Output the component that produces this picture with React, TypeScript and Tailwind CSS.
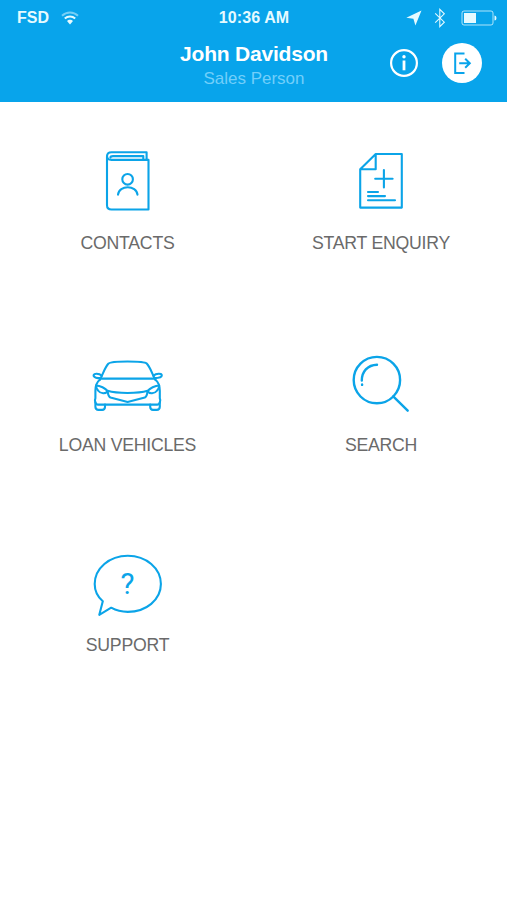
import type { ReactNode } from 'react'

interface MenuItem {
  id: string
  label: string
  icon: ReactNode
}

function ContactsIcon() {
  return (
    <>
      <path d="M24.5 4H59.6V11.6H61.5V61.2H24.5Q20 61.2 20 57V8.2Q20 4 24.5 4Z" />
      <path d="M20 8C20 10.8 22 11.6 24.5 11.6H60M56.3 11.2V7.8H26Q23.6 7.8 23.4 9.2" />
      <circle cx="40.6" cy="31" r="5.3" />
      <path d="M31 46.4C32 36.4 49.5 36.4 50.5 46.4" />
    </>
  )
}

function EnquiryIcon() {
  return (
    <>
      <path d="M35.7 5.7H61.8V59.3H20.2V21L35.7 5.7V21H20.2" />
      <path d="M43.9 21.8V39.2M35.2 30.5H52.6M28 43.7H38M28 47.8H45M28 52H55" />
    </>
  )
}

function CarIcon() {
  return (
    <>
      <path d="M12.8 29.5C16 24 17.8 17 21.5 13.3C24 10.5 57 10.5 59.7 13.3C63.4 17 65.2 24 68.4 29.5" />
      <path d="M13.4 28.3H67.8M13.8 27.8C10.5 27.8 6.6 27.5 6.6 25C6.6 22.8 12 22.8 14.8 25.4M67.4 27.8C70.7 27.8 74.8 27.5 74.8 25C74.8 22.8 69.2 22.8 66.4 25.4" />
      <path d="M12.8 29.5C9 32.5 8.4 36 8.4 40.5V48C7.4 50 8.2 54.3 11 54.3H70.2C73 54.3 73.8 50 72.8 48V40.5C72.8 36 72.2 32.5 68.4 29.5" />
      <path d="M8.4 52V56.5Q8.4 59.6 11.5 59.6H15.2Q18 59.6 18 56.5V54.3M72.8 52V56.5Q72.8 59.6 69.7 59.6H66Q63.2 59.6 63.2 56.5V54.3" />
      <path d="M9 35.2C13 35.3 18.5 38 20.6 40.8C19 43.8 13.5 43.6 11 40.2C9.6 38.4 9 37 9 35.2M72.2 35.2C68.2 35.3 62.7 38 60.6 40.8C62.2 43.8 67.7 43.6 70.2 40.2C71.6 38.4 72.2 37 72.2 35.2" />
      <path d="M20.6 40.5C30 43.4 51.2 43.4 60.6 40.5C60.3 43.5 60 46 57.8 47.2L40.6 51.7L23.4 47.2C21.2 46 20.9 43.5 20.6 40.5" />
    </>
  )
}

function SearchIcon() {
  return (
    <>
      <circle cx="36.9" cy="29.8" r="23.2" strokeWidth="2.4" />
      <path d="M53.2 46L67.7 60.4M37 14.4C27.5 14.6 21.8 21.5 21.8 30.2M22.1 34.2V34.6" strokeWidth="2.4" />
    </>
  )
}

function SupportIcon() {
  return (
    <>
      <path d="M15.8 51C10.5 46.5 7.7 40.5 7.7 33.8C7.7 18 22.4 5.4 40.8 5.4C59.2 5.4 73.9 18 73.9 33.8C73.9 49.4 59.2 61.6 40.8 61.6C34.8 61.6 29 60.1 24.2 57.4L12.3 64.5Z" />
      <text
        x="40.6"
        y="43.7"
        textAnchor="middle"
        fontSize="29.5"
        fill="currentColor"
        stroke="none"
        className="font-[Roboto,sans-serif]"
      >
        ?
      </text>
    </>
  )
}

const MENU_ITEMS: MenuItem[] = [
  { id: 'contacts', label: 'CONTACTS', icon: <ContactsIcon /> },
  { id: 'enquiry', label: 'START ENQUIRY', icon: <EnquiryIcon /> },
  { id: 'vehicles', label: 'LOAN VEHICLES', icon: <CarIcon /> },
  { id: 'search', label: 'SEARCH', icon: <SearchIcon /> },
  { id: 'support', label: 'SUPPORT', icon: <SupportIcon /> },
]

function StatusBar() {
  return (
    <div className="grid h-9 grid-cols-[1fr_auto_1fr] items-center pl-[17px] pr-[10px] text-[#e5faff]">
      <div className="flex items-center gap-3">
        <span className="text-[16px] font-bold">FSD</span>
        <svg width="18" height="14" viewBox="0 0 18 14" fill="none" stroke="currentColor" strokeWidth="2">
          <path d="M1 4.8C5.5 .4 12.5 .4 17 4.8" opacity=".5" />
          <path d="M3.8 7.6C6.8 4.8 11.2 4.8 14.2 7.6" />
          <path d="M6 10C7.6 8.2 10.4 8.2 12 10L9 13.4Z" fill="currentColor" stroke="none" />
        </svg>
      </div>
      <span className="mr-[6px] text-[16px] font-bold tracking-[0.1px] whitespace-nowrap">10:36 AM</span>
      <div className="flex items-center justify-end">
        <svg width="16" height="16" viewBox="0 0 16 16" fill="currentColor" className="mr-3">
          <path d="M15.5 .5L9.4 15.6L7.4 8.8L.3 7.8Z" />
        </svg>
        <svg
          width="12"
          height="20"
          viewBox="0 0 12 20"
          fill="none"
          stroke="currentColor"
          strokeWidth="1.1"
          className="mr-[15px]"
        >
          <path d="M1.2 5.3L10.3 14.2L5.8 18.6V1.4L10.3 5.8L1.2 14.7" />
        </svg>
        <svg width="36" height="16" viewBox="0 0 36 16" fill="none" stroke="currentColor">
          <rect x="1" y="1" width="31" height="14" rx="2" opacity=".75" />
          <rect x="3" y="3" width="12" height="10" fill="currentColor" stroke="none" />
          <path d="M33.5 5.5Q35.5 5.5 35.5 8T33.5 10.5Z" fill="currentColor" stroke="none" />
        </svg>
      </div>
    </div>
  )
}

export default function App() {
  return (
    <div className="min-h-[900px] w-full bg-white font-['Liberation_Sans',Arial,sans-serif]">
      <header className="h-[102px] bg-[#08a4eb]">
        <StatusBar />
        <div className="grid grid-cols-[1fr_auto_1fr] items-start pr-[25.5px] pl-[26.5px]">
          <div />
          <div className="pt-[5px] text-center whitespace-nowrap">
            <h1 className="text-[21px] leading-[26px] font-bold tracking-[-0.2px] text-white">John Davidson</h1>
            <p className="text-[17px] leading-6 text-[#72cffa]">Sales Person</p>
          </div>
          <div className="flex items-center justify-end gap-6 pt-[7px]">
            <button aria-label="Info">
              <svg width="28" height="28" viewBox="0 0 28 28" fill="none" stroke="white">
                <circle cx="14" cy="14" r="12.9" strokeWidth="2.2" />
                <path d="M14 11.5V21.3" strokeWidth="2.8" />
                <circle cx="14" cy="7.8" r="1.7" fill="white" stroke="none" />
              </svg>
            </button>
            <button
              aria-label="Log out"
              className="flex size-10 items-center justify-center rounded-full bg-white text-[#08a4eb]"
            >
              <svg width="20" height="22" viewBox="0 0 20 22" fill="none" stroke="currentColor" strokeWidth="2">
                <path d="M12.5 1.5H3.2V21H12.5M7.2 11.3H17.6M13.2 6.8L17.8 11.3L13.2 15.8" />
              </svg>
            </button>
          </div>
        </div>
      </header>

      <main className="grid grid-cols-2 grid-rows-[202px_200px_auto] pt-[46px]">
        {MENU_ITEMS.map((item) => (
          <button key={item.id} className="flex flex-col items-center self-start">
            <svg
              width="80"
              height="66"
              viewBox="0 -0.3 80 66"
              fill="none"
              stroke="currentColor"
              strokeWidth="2.1"
              strokeLinecap="round"
              strokeLinejoin="round"
              className="text-[#0ba4e8]"
            >
              {item.icon}
            </svg>
            <span className="mt-[17px] pl-[1.5px] text-[17.7px] leading-6 tracking-[-0.25px] text-[#6a6a6a]">
              {item.label}
            </span>
          </button>
        ))}
      </main>
    </div>
  )
}
